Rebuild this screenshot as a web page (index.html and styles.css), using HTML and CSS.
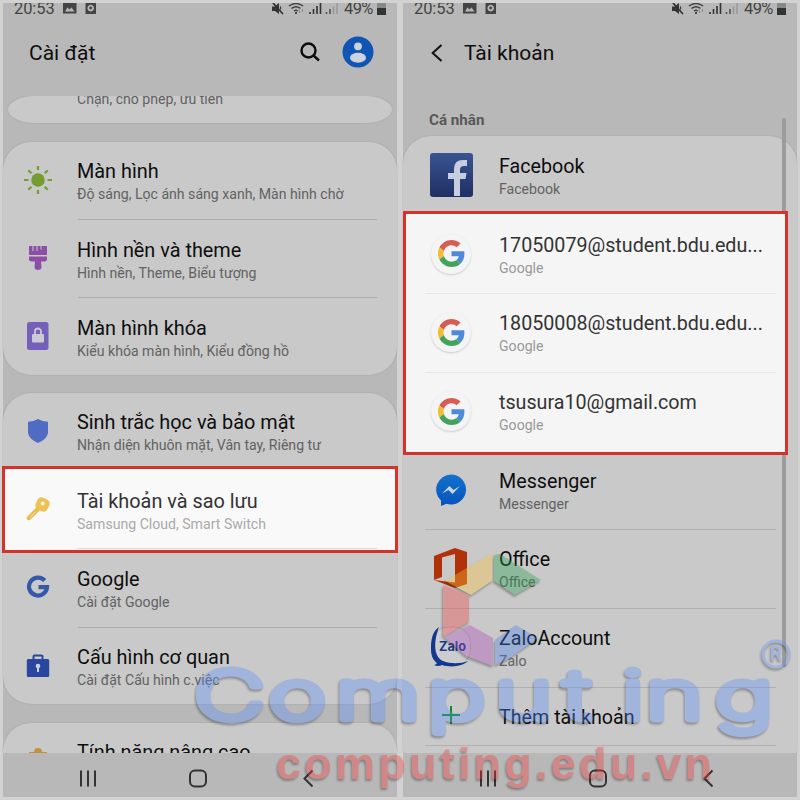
FILE: index.html
```html
<!DOCTYPE html>
<html lang="vi">
<head>
<meta charset="utf-8">
<title>Cài đặt – Tài khoản</title>
<link rel="stylesheet" href="styles.css">
</head>
<body>
<svg class="defs" width="0" height="0" aria-hidden="true">
  <defs>
    <linearGradient id="fb" x1="0" y1="0" x2="0" y2="1"><stop offset="0" stop-color="#3a5492"/><stop offset="1" stop-color="#1e2f63"/></linearGradient>
    <linearGradient id="ms" x1="0" y1="0" x2="0" y2="1"><stop offset="0" stop-color="#1272cc"/><stop offset="1" stop-color="#0652bd"/></linearGradient>
    <symbol id="status-left" viewBox="0 0 34 12">
      <path fill="#444" fill-rule="evenodd" d="M0 0h13.500v10.500H0zM2 8.500h9.500L8.500 4.500 6.500 6.500 4.500 4.500zM22.500 0H33v11H22.500zM27.700 1.800a3.300 3.300 0 1 0 .01 0z"/>
      <circle cx="27.700" cy="5" r="1.400" fill="#444"/>
    </symbol>
    <symbol id="status-right" viewBox="0 0 68 13">
      <path fill="#333" d="M1 3.500h3l4-3.500v11L4 8H1z"/>
      <path stroke="#333" stroke-width="1.700" d="M2 0l10 11"/>
      <path stroke="#333" stroke-width="1.200" d="M9.500 3.500v3"/>
      <g fill="none" stroke="#444" stroke-width="1.500"><path d="M18 3q7-5 14 0M20.500 5.500q4.500-3.500 9 0M23 8q2-1.500 4 0"/></g>
      <path fill="#444" d="M24 9h2v2h-2z"/>
      <path stroke="#888" d="M28.500 7v3M31.500 6v3"/>
      <path stroke="#333" stroke-width="1.600" d="M39 9v2M42.500 6v5M46 3v8M49.500 0v11"/>
      <path stroke="#555" stroke-width="1.600" d="M55.500 9v2M59 6v5"/>
      <path stroke="#999" stroke-width="1.500" d="M62.500 3v8M66 0v11"/>
    </symbol>
    <symbol id="google-color" viewBox="0 0 48 48">
      <path fill="#d65c54" d="M24 9.500c3.500 0 6.700 1.200 9.200 3.600l6.900-6.900C35.900 2.400 30.500 0 24 0 14.600 0 6.500 5.400 2.600 13.200l8 6.200C12.400 13.700 17.700 9.500 24 9.500z"/>
      <path fill="#4f8ad8" d="M47 24.500c0-1.600-.2-3.100-.4-4.500H24v9h12.900c-.6 3-2.200 5.500-4.700 7.200l7.700 6C44.400 38 47 31.800 47 24.500z"/>
      <path fill="#f0bd33" d="M10.500 28.600A14.500 14.500 0 0 1 10.500 19.400l-8-6.200a24 24 0 0 0 0 21.600z"/>
      <path fill="#43a25c" d="M24 48c6.500 0 11.900-2.100 15.900-5.800l-7.700-6c-2.200 1.500-4.900 2.300-8.200 2.300-6.300 0-11.600-4.200-13.500-9.900l-8 6.200C6.500 42.600 14.600 48 24 48z"/>
    </symbol>
    <symbol id="nav" viewBox="0 0 240 20">
      <path stroke="#333" stroke-width="2" d="M4 2.500v16M11 2.500v16M18 2.500v16"/>
      <rect x="113" y="2.500" width="16" height="16" rx="5" fill="none" stroke="#333" stroke-width="2"/>
      <path d="M235.500 2.500l-8 8 8 8" fill="none" stroke="#333" stroke-width="2"/>
    </symbol>
  </defs>
</svg>

<main class="screens">
  <section class="phone">
    <div class="status"><span class="clock">20:53</span><svg class="st-left"><use href="#status-left"/></svg><svg class="st-right"><use href="#status-right"/></svg><span class="percent">49%</span><i class="battery"></i></div>
    <header class="bar">
      <h1>Cài đặt</h1>
      <svg class="search" viewBox="0 0 20 20" fill="none" stroke="#0c0c0c" stroke-width="2.400"><circle cx="8.500" cy="8.500" r="7"/><path d="M13.500 13.500l5.500 5"/></svg>
      <svg class="avatar" viewBox="0 0 32 32"><circle cx="16" cy="16" r="15.500" fill="#1155b4"/><circle cx="16" cy="10.300" r="3.900" fill="#ccd3dc"/><ellipse cx="16" cy="21.800" rx="8" ry="5" fill="#ccd3dc"/></svg>
    </header>
    <div class="list">
      <div class="card card-cut"><p>Chặn, cho phép, ưu tiên</p></div>
      <div class="card card-a">
        <div class="row">
          <span class="icon"><svg width="30" height="30" viewBox="0 0 30 30"><circle cx="15" cy="15" r="6.800" fill="#759d2f"/><path stroke="#759d2f" stroke-width="2.200" d="M15 1v4M15 25v4M1 15h4.500M24.500 15H29M5.300 5.300l3 3M21.700 21.700l3 3M5.300 24.700l3-3M21.700 8.300l3-3"/></svg></span>
          <div class="text"><h2>Màn hình</h2><p>Độ sáng, Lọc ánh sáng xanh, Màn hình chờ</p></div>
        </div>
        <div class="row">
          <span class="icon"><svg width="20" height="26" viewBox="0 0 20 26" fill="#8b4fa5"><path d="M1 1h3.500v5h1V1h3v5h1V1h3v3.500h1V1H19v9H1z"/><path d="M1 11.500h18V15q-1 1.500-3 1.500h-3l.5 6q-.5 2.500-3.500 2.500t-3.500-2.500l.5-6H4Q2 16.500 1 15z"/></svg></span>
          <div class="text"><h2>Hình nền và theme</h2><p>Hình nền, Theme, Biểu tượng</p></div>
        </div>
        <div class="row">
          <span class="icon"><svg width="22" height="28" viewBox="0 0 22 28"><rect width="21.500" height="28" rx="2.500" fill="#7460b8"/><rect x="5" y="12" width="12" height="8.500" rx="1" fill="#ccc9d6"/><path d="M8 12V9.500a3 3 0 0 1 6 0V12" fill="none" stroke="#ccc9d6" stroke-width="1.800"/></svg></span>
          <div class="text"><h2>Màn hình khóa</h2><p>Kiểu khóa màn hình, Kiểu đồng hồ</p></div>
        </div>
      </div>
      <div class="card card-b">
        <div class="row">
          <span class="icon"><svg width="20" height="24" viewBox="0 0 20 24"><path fill="#506bc2" d="M10 0q4 2.500 10 2.700V14q-1 6-10 10Q1 20 0 14V2.700Q6 2.500 10 0z"/></svg></span>
          <div class="text"><h2>Sinh trắc học và bảo mật</h2><p>Nhận diện khuôn mặt, Vân tay, Riêng tư</p></div>
        </div>
        <div class="row picked">
          <span class="icon"><svg width="24" height="24" viewBox="0 0 24 24"><path stroke="#e8bb4e" stroke-width="4.500" stroke-linecap="round" d="M3 21L13 11"/><rect x="10" y="1" width="13" height="13" rx="4.500" fill="#edc155" transform="rotate(25 16.500 7.500)"/><circle cx="16.800" cy="6.500" r="2" fill="#fff3cb"/><path d="M4 20.500l6-6" stroke="#fae6b0" stroke-width="1"/></svg></span>
          <div class="text"><h2>Tài khoản và sao lưu</h2><p>Samsung Cloud, Smart Switch</p></div>
        </div>
        <div class="row">
          <span class="icon"><svg width="24" height="24" viewBox="0 0 24 24" fill="none" stroke="#3558a8" stroke-width="4.200"><path d="M18.700 5.500A9 9 0 1 0 21 12.100H12.500"/></svg></span>
          <div class="text"><h2>Google</h2><p>Cài đặt Google</p></div>
        </div>
        <div class="row">
          <span class="icon"><svg width="24" height="24" viewBox="0 0 24 24"><path d="M7.500 6V2.500Q7.500 1.500 8.500 1.500h7q1 0 1 1V6" fill="none" stroke="#2a479f" stroke-width="2"/><rect x=".8" y="5" width="22.400" height="18" rx="1.500" fill="#2a479f"/><circle cx="12" cy="12" r="2.300" fill="#ccd0dc"/><path d="M11 12h2v6h-2z" fill="#ccd0dc"/></svg></span>
          <div class="text"><h2>Cấu hình cơ quan</h2><p>Cài đặt Cấu hình c.việc</p></div>
        </div>
      </div>
      <div class="card card-c">
        <div class="row">
          <span class="icon"><svg width="20" height="26" viewBox="0 0 20 26"><circle cx="10" cy="4" r="4" fill="#c4913e"/><path d="M1 4h18v12H1z" fill="#c4913e"/></svg></span>
          <div class="text"><h2>Tính năng nâng cao</h2></div>
        </div>
      </div>
    </div>
    <nav class="nav"><svg width="240" height="20"><use href="#nav"/></svg></nav>
  </section>

  <section class="phone">
    <div class="status"><span class="clock">20:53</span><svg class="st-left"><use href="#status-left"/></svg><svg class="st-right"><use href="#status-right"/></svg><span class="percent">49%</span><i class="battery"></i></div>
    <header class="bar bar-back">
      <svg class="back" viewBox="0 0 12 18" fill="none" stroke="#111" stroke-width="2"><path d="M10.500 1L1.700 9l8.800 8"/></svg>
      <h1>Tài khoản</h1>
    </header>
    <div class="list accounts">
      <h3>Cá nhân</h3>
      <div class="card card-accounts">
        <div class="row">
          <span class="icon"><svg width="43" height="44" viewBox="0 0 43 44"><rect width="43" height="44" rx="3" fill="url(#fb)"/><path fill="#c7cde0" d="M24 43V26h-6v-6h6v-4q0-9 9-9h4v6h-3q-4 0-4 3.500V20h6.500l-1 6H30v17z"/></svg></span>
          <div class="text"><h2>Facebook</h2><p>Facebook</p></div>
        </div>
        <div class="picked-group">
          <div class="row">
            <span class="icon"><b class="disc"><svg width="27" height="27"><use href="#google-color"/></svg></b></span>
            <div class="text"><h2>17050079@student.bdu.edu...</h2><p>Google</p></div>
          </div>
          <div class="row">
            <span class="icon"><b class="disc"><svg width="27" height="27"><use href="#google-color"/></svg></b></span>
            <div class="text"><h2>18050008@student.bdu.edu...</h2><p>Google</p></div>
          </div>
          <div class="row">
            <span class="icon"><b class="disc"><svg width="27" height="27"><use href="#google-color"/></svg></b></span>
            <div class="text"><h2>tsusura10@gmail.com</h2><p>Google</p></div>
          </div>
        </div>
        <div class="row">
          <span class="icon"><svg width="32" height="32" viewBox="0 0 32 32"><path fill="url(#ms)" d="M16 .5a15 15 0 1 1-4.500 29.300L6 32V26.500A15 15 0 0 1 16 .5z"/><path fill="#cbd5e2" d="M7 19.500l7.500-7.500 4 4 6.500-4-7.500 8-4-4z"/></svg></span>
          <div class="text"><h2>Messenger</h2><p>Messenger</p></div>
        </div>
        <div class="row">
          <span class="icon"><svg width="34" height="40" viewBox="0 0 34 40"><path fill="#b13209" d="M0 8L21 0l12 4v32l-12 4L0 32l21 2.500V6L8 9.500v19.500L0 32z"/></svg></span>
          <div class="text"><h2>Office</h2><p>Office</p></div>
        </div>
        <div class="row">
          <span class="icon"><svg width="42" height="42" viewBox="0 0 42 42"><rect x="2" y="1" width="38.500" height="38.500" rx="16" fill="#cdcdd0" stroke="#aaa" stroke-width=".8"/><path fill="#11388e" d="M9 1C2 6 1 14 1 23c0 8 3 12 6 14q-1 2-3 2 4 2 8 0c10 3 21 1 26-4-7 3-18 3-25 0C4 31 3 17 9 1z"/><text x="9" y="24.500" textLength="27" lengthAdjust="spacingAndGlyphs" class="zalo">Zalo</text></svg></span>
          <div class="text"><h2>ZaloAccount</h2><p>Zalo</p></div>
        </div>
        <div class="row row-add">
          <span class="icon"><svg width="18" height="18" viewBox="0 0 18 18" stroke="#128a22" stroke-width="2"><path d="M9 0v18M0 9h18"/></svg></span>
          <div class="text"><h2>Thêm tài khoản</h2></div>
        </div>
      </div>
      <i class="scroll"></i>
    </div>
    <nav class="nav"><svg width="240" height="20"><use href="#nav"/></svg></nav>
  </section>
</main>

<svg class="watermark" width="800" height="800" viewBox="0 0 800 800">
  <g class="cubes">
    <path fill="#ffc637" d="M492.500 553v27.500L471 595l-26-14 20-12z"/>
    <path fill="#1b9c46" d="M494 555l6-1 41 26-26 15-21-14z"/>
    <path fill="#f53c3c" d="M443 585l26 10v27l-26 15z"/>
    <path fill="#aa46b9" d="M444 637l26-12 23 13v28l-27-10z"/>
    <path fill="#467ff0" d="M495 640l21-15 22 13-30 21-13 6z"/>
  </g>
  <g class="brand">
    <text transform="scale(1.45 1)" y="719.500" x="134 185.500 231.500 295 341.500 389 429 445.500 493.500">Computing</text>
    <circle cx="776" cy="654" r="13" class="ring"/><text x="770" y="660" class="reg">R</text>
  </g>
  <text class="site" x="276" y="779" textLength="436">computing.edu.vn</text>
</svg>
</body>
</html>
```

FILE: styles.css
```css
* { box-sizing: border-box; }
body { margin: 0; width: 800px; height: 800px; overflow: hidden; position: relative; background: #d2d2d2; font-family: Roboto, "Noto Sans", sans-serif; color: #0e0e0e; }
h1, h2, h3, p { margin: 0; font-weight: 400; white-space: nowrap; }
svg { display: block; flex: none; }
.defs { position: absolute; }
.screens { display: flex; gap: 6px; padding: 3px; height: 800px; }
.phone { width: 394px; height: 794px; background: #b8b8b8; display: flex; flex-direction: column; }

.status { height: 14px; display: flex; align-items: flex-start; overflow: hidden; padding-left: 11px; color: #444; font-size: 16.500px; line-height: 14px; flex: none; }
.clock { width: 49px; margin-top: -1px; letter-spacing: -.1px; }
.st-left { width: 34px; height: 12px; }
.st-right { width: 68px; height: 13px; margin-left: 174px; }
.percent { margin: -1px 0 0 5px; width: 33px; letter-spacing: -.6px; }
.battery { width: 9px; height: 12px; margin-left: 0; background: linear-gradient(#888 40%, #333 40%); }

.bar { height: 79px; padding: 0 23px 7px 26px; display: flex; align-items: center; flex: none; }
.bar h1 { font-size: 21px; flex: 1; }
.search { width: 20px; height: 20px; margin-right: 22px; margin-top: -2px; }
.avatar { width: 32px; height: 32px; margin-top: -2px; }
.bar-back { padding-left: 28px; }
.back { width: 12px; height: 18px; margin-right: 21px; margin-top: -1px; }

.list { height: 657px; overflow-x: visible; overflow-y: clip; position: relative; flex: none; }
.card { background: #c9c9c9; border-radius: 28px; box-shadow: 0 0 1.500px #999; }
.card-cut { height: 27px; margin: 0 5px; border-radius: 28px / 14px; padding-left: 69px; display: flex; align-items: flex-start; }
.card-cut p { margin-top: -7px; }
.card-a { margin-top: 19px; height: 233px; }
.card-b { margin-top: 18px; height: 311px; }
.card-c { margin-top: 19px; height: 60px; }
.row { height: 78.200px; display: flex; position: relative; }
.icon { width: 70px; height: 76px; display: flex; align-items: center; justify-content: center; flex: none; }
.text { flex: 1; margin: 0 20px 0 4px; padding-top: 17.400px; position: relative; }
h2 { font-size: 19.700px; line-height: 25px; height: 25px; }
p { font-size: 14.100px; line-height: 20px; color: #626262; }
.row:not(:last-child) .text { border-bottom: 1.500px solid #adadad; }
.card-a .text, .card-b .text { border-image: linear-gradient(90deg, transparent 2px, #adadad 2px) 1; border-width: 0; }
.card-a h2, .card-b h2, .card-c h2 { font-size: 19.850px; }
.picked { z-index: 0; }
.picked::before { content: ""; position: absolute; z-index: -1; inset: -5px -1px -4px; background: #f9f9f9; border: 3px solid #d3332a; }
.picked h2 { color: #333; }
.picked p { color: #aaa; }
.picked:not(:last-child) .text { border-image: none; border-bottom-color: #ddd; }

.accounts h3 { font-size: 15.200px; font-weight: 700; color: #595959; line-height: 20px; height: 40px; padding: 14px 0 0 26px; }
.card-accounts { height: 640px; }
.card-accounts .row { height: 78.700px; }
.card-accounts .row:not(:last-child)::after { content: ""; position: absolute; left: 22px; right: 21px; bottom: -1px; height: 1px; background: #b0b0b0; }
.card-accounts .row .text { border: 0; margin-left: 0; padding-top: 18px; }
.card-accounts .icon { width: 96px; height: 78px; }
.card-accounts .picked-group { position: relative; z-index: 2; }
.picked-group::before { content: ""; position: absolute; z-index: -1; inset: -4px 9px -4px 0; background: #f5f5f5; border: 3px solid #d3332a; }
.picked-group h2 { color: #333; }
.picked-group p { color: #999; }
.card-accounts .picked-group .row:not(:last-child)::after { background: #e6e6e6; }
.disc { width: 40px; height: 40px; border-radius: 50%; display: flex; align-items: center; justify-content: center; background: #f5f4f5; box-shadow: 0 1px 2px #ccc; }
.card-accounts .row-add { height: 57px; }
.card-accounts .row-add::after { content: ""; position: absolute; left: 22px; right: 21px; bottom: -2px; height: 1px; background: #b0b0b0; }
.card-accounts .row-add .icon { height: 56px; }
.zalo { font: 700 13px Inter, sans-serif; fill: #183e8c; }
.scroll { position: absolute; right: 11px; top: 22px; width: 4px; height: 549px; border-radius: 2px; background: #9c9c9c; z-index: 1; }

.nav { height: 44px; padding: 15px 0 0 74px; background: #b8b8b8; flex: none; }
.watermark { position: absolute; left: 0; top: 0; z-index: 5; pointer-events: none; }
.cubes { opacity: .35; filter: drop-shadow(-1px 2px 1px #222); }
.brand { opacity: .36; filter: drop-shadow(-1px 2px 1px #222); fill: #5a90ff; stroke: #5a90ff; stroke-width: 7px; stroke-linejoin: round; stroke-linecap: round; font: 200 67px Inter, sans-serif; }
.ring { fill: none; stroke-width: 3px; }
.reg { font-size: 18px; font-weight: 400; stroke-width: 1px; }
.site { opacity: .37; filter: drop-shadow(-1px 2px 1px #222); font: 700 45px "Liberation Sans", sans-serif; fill: #f73434; }
```
